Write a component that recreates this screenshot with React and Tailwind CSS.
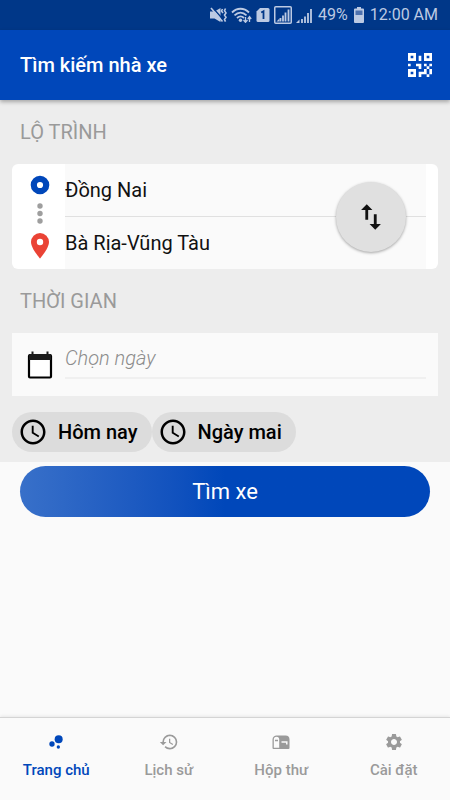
import { useState } from 'react'
import clsx from 'clsx'
import { MdBubbleChart, MdHistory, MdImportExport, MdSchedule, MdSettings } from 'react-icons/md'

function MuteIcon() {
    return (
        <svg width="17" height="16" viewBox="0 0 17 16" fill="currentColor" aria-hidden="true">
            <path d="M0 4.500h4.500L10.500 1v14l-6-3.500H0z" />
            <path d="M2.500 0.500l11 12.500" stroke="#003788" strokeWidth="1.400" />
            <path d="M1 1l11.500 13.500" stroke="currentColor" strokeWidth="1.600" />
            <path d="M12.500 2l-1 2 1.500 2M15.500 1.500l-1 2.200 1.500 2.200-1.500 2.200 1.500 2.200-1.500 2.200 1 2.200" fill="none" stroke="currentColor" strokeWidth="1.600" />
        </svg>
    )
}

function WifiIcon() {
    return (
        <svg width="21" height="16" viewBox="0 0 21 16" fill="none" stroke="currentColor" strokeWidth="1.800" aria-hidden="true">
            <path d="M1 5.500c5-5 12-5 17 0M3.500 8.300c3.600-3.400 8.400-3.400 12 0M6 11c2.200-2 5-2 7 0" />
            <circle cx="9.500" cy="13.300" r="1.700" fill="currentColor" stroke="none" />
            <path d="M14.500 10v5M12.500 13l2 2.300 2-2.300M18.500 15v-5M16.800 12l1.700-2.300 1.700 2.300" strokeWidth="1.300" />
        </svg>
    )
}

function SimIcon() {
    return (
        <svg width="14" height="16" viewBox="0 0 14 16" aria-hidden="true">
            <path d="M4 1h8a1.500 1.500 0 0 1 1.500 1.500v11A1.500 1.500 0 0 1 12 15H2a1.500 1.500 0 0 1-1.500-1.500v-9z" fill="currentColor" />
            <path d="M5.200 5.500L7.500 4.300V12" fill="none" stroke="#003788" strokeWidth="1.800" />
        </svg>
    )
}

function SignalIcon({ boxed }) {
    return (
        <svg width={boxed ? 18 : 16} height="18" viewBox={boxed ? '0 0 18 18' : '0 0 16 18'} fill="none" stroke="currentColor" aria-hidden="true">
            {boxed && <rect x="0.750" y="0.750" width="16.500" height="16.500" rx="1" strokeWidth="1.500" />}
            {boxed
                ? <path d="M6.500 15.500V12M9 15.500V9.500M11.500 15.500V6.500M14.500 15.500V3.500" strokeWidth="1.800" />
                : <path d="M6 17v-4M9 17v-6.500M12 17V7M15 17V3" strokeWidth="1.800" />}
            <path d={boxed ? 'M2.500 15.500l3-3v3z' : 'M0 17l3.500-3.500V17z'} fill="currentColor" stroke="none" />
        </svg>
    )
}

function BatteryIcon() {
    return (
        <svg width="10" height="16" viewBox="0 0 10 16" aria-hidden="true">
            <path d="M3 0h4v1.500h2a1 1 0 0 1 1 1V15a1 1 0 0 1-1 1H1a1 1 0 0 1-1-1V2.500a1 1 0 0 1 1-1h2z" fill="currentColor" />
            <path d="M1.500 3.500h7V8h-7z" fill="#4d71ae" />
        </svg>
    )
}

function QrIcon() {
    return (
        <svg width="32" height="32" viewBox="0 0 24 24" fill="currentColor" aria-hidden="true">
            <path d="M3,11H5V13H3V11M11,5H13V9H11V5M9,11H13V15H11V13H9V11M15,11H17V13H19V11H21V13H19V15H21V19H19V21H17V19H13V21H11V17H15V15H17V13H15V11M19,19V15H17V19H19M15,3H21V9H15V3M17,5V7H19V5H17M3,3H9V9H3V3M5,5V7H7V5H5M3,15H9V21H3V15M5,17V19H7V17H5Z" />
        </svg>
    )
}

// Départ, pointillés et arrivée
function RouteIcon() {
    return (
        <svg width="20" height="84" viewBox="0 0 20 84" aria-hidden="true">
            <circle cx="10" cy="10" r="6.200" fill="#fff" stroke="#0047ba" strokeWidth="6.200" />
            <g fill="#9e9e9e">
                <circle cx="10" cy="31" r="2.700" />
                <circle cx="10" cy="38.500" r="2.700" />
                <circle cx="10" cy="46" r="2.700" />
            </g>
            <path d="M10 58a9 9 0 0 0-9 9c0 6.500 9 16.500 9 16.500s9-10 9-16.500a9 9 0 0 0-9-9z" fill="#ea4335" />
            <circle cx="10" cy="67" r="3.200" fill="#fff" />
        </svg>
    )
}

function CalendarIcon() {
    return (
        <svg width="26" height="28" viewBox="0 0 26 28" aria-hidden="true">
            <rect x="2" y="4" width="22" height="22.500" rx="1" fill="#fff" stroke="#000" strokeWidth="2.200" />
            <path d="M2 3h22v6H2zM4.500 0.500h2V4h-2zM19.500 0.500h2V4h-2z" fill="#1b1b1b" />
        </svg>
    )
}

function MailboxIcon() {
    return (
        <svg width="20" height="20" viewBox="0 0 20 20" aria-hidden="true">
            <path d="M6 3.500h8.500a4 4 0 0 1 4 4V16a1 1 0 0 1-1 1H2.500a1 1 0 0 1-1-1V7.500A4 4 0 0 1 6 3.500z" fill="currentColor" />
            <path d="M2.800 7.500a2.700 2.700 0 0 1 5.400 0v8.200H2.800z" fill="#fafafa" />
            <path d="M4 8.500h3" stroke="currentColor" strokeWidth="1.500" />
            <path d="M10.500 10h5.300v2.500" fill="none" stroke="#fafafa" strokeWidth="1.500" />
        </svg>
    )
}

const tabs = [
    { id: 'home', label: 'Trang chủ', Icon: MdBubbleChart },
    { id: 'history', label: 'Lịch sử', Icon: MdHistory },
    { id: 'inbox', label: 'Hộp thư', Icon: MailboxIcon },
    { id: 'settings', label: 'Cài đặt', Icon: MdSettings },
]

export default function App() {
    const [from, setFrom] = useState('Đồng Nai')
    const [to, setTo] = useState('Bà Rịa-Vũng Tàu')
    const [date, setDate] = useState('')
    const [tab, setTab] = useState('home')

    const swap = () => {
        setFrom(to)
        setTo(from)
    }

    return (
        <div className="flex min-h-screen flex-col bg-[#fafafa] font-['Roboto',sans-serif] text-[#111]">
            {/* Status bar */}
            <div className="flex h-[30px] items-center justify-end gap-1.5 bg-[#003788] pr-3 text-base text-[#bccae3]">
                <div className="flex items-center gap-1">
                    <MuteIcon />
                    <WifiIcon />
                    <SimIcon />
                    <SignalIcon boxed />
                    <SignalIcon />
                </div>
                <span>49%</span>
                <BatteryIcon />
                <span>12:00 AM</span>
            </div>

            <header className="z-10 flex h-[70px] items-center justify-between bg-[#0047ba] pr-3.5 pl-5 text-white shadow-[0_2px_4px_rgba(0,0,0,0.3)]">
                <h1 className="text-xl font-medium">Tìm kiếm nhà xe</h1>
                <button type="button" aria-label="QR">
                    <QrIcon />
                </button>
            </header>

            <main className="flex-1">
                <div className="bg-[#ededed] px-3 pb-2.5">
                    <h2 className="flex h-16 items-center px-2 text-xl text-[#9a9a9a]">LỘ TRÌNH</h2>
                    <div className="relative flex rounded-md bg-white pr-3">
                        <div className="flex w-[53px] shrink-0 items-center justify-center pl-0.5">
                            <RouteIcon />
                        </div>
                        <div className="flex-1 bg-[#fafafa]">
                            <input
                                aria-label="Điểm đi"
                                value={from}
                                onChange={(e) => setFrom(e.target.value)}
                                className="block h-[53px] w-full border-b border-[#e0e0e0] text-xl outline-none"
                            />
                            <input
                                aria-label="Điểm đến"
                                value={to}
                                onChange={(e) => setTo(e.target.value)}
                                className="block h-[52px] w-full text-xl outline-none"
                            />
                        </div>
                        <button
                            type="button"
                            aria-label="Đổi chiều"
                            onClick={swap}
                            className="absolute inset-y-0 right-8 my-auto flex size-[70px] items-center justify-center rounded-full bg-[#e0e0e0] shadow-[0_1px_3px_rgba(0,0,0,0.35)]"
                        >
                            <MdImportExport size={34} />
                        </button>
                    </div>

                    <h2 className="flex h-16 items-center px-2 text-xl text-[#9a9a9a]">THỜI GIAN</h2>
                    <div className="flex h-[63px] items-center bg-[#fafafa] pr-3">
                        <div className="flex w-[53px] shrink-0 justify-center pl-0.5">
                            <CalendarIcon />
                        </div>
                        <input
                            aria-label="Ngày đi"
                            placeholder="Chọn ngày"
                            value={date}
                            onChange={(e) => setDate(e.target.value)}
                            className="mb-3 h-10 min-w-0 flex-1 border-b-2 border-[#f0f0f0] text-xl font-light outline-none placeholder:text-[#8c8c8c] placeholder:italic"
                        />
                    </div>

                    <div className="mt-4 flex">
                        {['Hôm nay', 'Ngày mai'].map((day) => (
                            <button
                                key={day}
                                type="button"
                                onClick={() => setDate(day)}
                                className="flex h-10 items-center gap-2.5 rounded-full bg-[#dcdcdc] pr-3.5 pl-1.5 text-xl font-medium text-black"
                            >
                                <MdSchedule size={30} />
                                {day}
                            </button>
                        ))}
                    </div>
                </div>

                <div className="px-5 pt-1">
                    <button
                        type="button"
                        className="h-[51px] w-full rounded-full bg-linear-to-r from-[#3870c9] to-[#0047ba] to-50% text-[22px] text-white"
                    >
                        Tìm xe
                    </button>
                </div>
            </main>

            <nav className="flex h-[83px] border-t border-[#d4d4d4] shadow-[0_-1px_3px_rgba(0,0,0,0.08)]">
                {tabs.map(({ id, label, Icon }) => (
                    <button
                        key={id}
                        type="button"
                        onClick={() => setTab(id)}
                        className={clsx(
                            'flex flex-1 flex-col items-center gap-2 pt-3.5 text-[15px] leading-5 font-medium',
                            tab === id ? 'text-[#0047ba]' : 'text-[#9a9a9a]'
                        )}
                    >
                        <Icon size={20} />
                        {label}
                    </button>
                ))}
            </nav>
        </div>
    )
}
